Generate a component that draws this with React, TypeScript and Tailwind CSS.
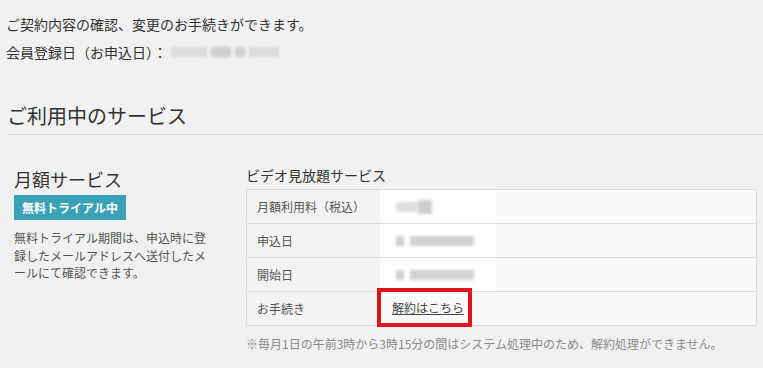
import React from "react";

const Blur = ({ w, className = "" }: { w: number; className?: string }) => (
  <span className={`inline-block h-[10px] bg-[#cfcfcf] blur-[1.5px] ${className}`} style={{ width: w }} />
);

const Row = ({ label, children, last = false }: { label: string; children: React.ReactNode; last?: boolean }) => (
  <div className={`flex ${last ? "h-[33px]" : "h-[34px] border-b border-[#dcdcdc]"}`}>
    <div className="w-[133px] shrink-0 bg-[#f3f3f3] pl-[10px] text-[#555] flex items-center">{label}</div>
    <div className="flex-1 bg-[#fafafa] relative flex items-center">{children}</div>
  </div>
);

export default function App() {
  return (
    <div className="w-[763px] h-[368px] overflow-hidden bg-[#f1f1f1] text-[#333] font-['Noto_Sans_CJK_JP','Noto_Sans',sans-serif]">
      <div className="pl-[6px] pt-[14px]">
        <p className="text-[14px] leading-[20px]">ご契約内容の確認、変更のお手続きができます。</p>
        <p className="text-[14px] leading-[20px] mt-[8px] flex items-center">
          会員登録日（お申込日）：
          <span className="ml-[4px] flex items-center gap-[4px]">
            <Blur w={36} className="bg-[#dcdcdc]" />
            <Blur w={20} className="bg-[#cbcbcb]" />
            <Blur w={10} className="bg-[#bdbdbd]" />
            <Blur w={30} className="bg-[#dcdcdc]" />
          </span>
        </p>
        <h2 className="text-[20px] leading-[30px] mt-[39px] ml-[1px]">ご利用中のサービス</h2>
        <div className="h-px bg-[#d8d8d8] mt-[3px] ml-[1px]" />
      </div>
      <div className="flex pl-[14px] mt-[30px]">
        <div className="w-[232px] pt-[2px]">
          <h3 className="text-[18px] leading-[24px]">月額サービス</h3>
          <div className="mt-[4px] inline-block bg-[#3aa2b6] text-white font-bold text-[12px] leading-[25px] px-[8px]">無料トライアル中</div>
          <p className="mt-[9px] text-[12px] leading-[17.5px] text-[#555] w-[200px]">
            無料トライアル期間は、申込時に登録したメールアドレスへ送付したメールにて確認できます。
          </p>
        </div>
        <div className="w-[511px]">
          <h4 className="text-[14px] leading-[20px]">ビデオ見放題サービス</h4>
          <div className="mt-[4px] border border-[#dcdcdc] text-[12px]">
            <Row label="月額利用料（税込）">
              <div className="bg-white w-[112px] h-full pl-[12px] flex items-center ml-[4px]">
                <Blur w={22} className="bg-[#dedede]" />
                <Blur w={14} className="bg-[#c8c8c8] h-[14px]" />
              </div>
            </Row>
            <Row label="申込日">
              <div className="bg-white w-[112px] h-full pl-[12px] flex items-center gap-[6px] ml-[4px]">
                <Blur w={8} />
                <Blur w={64} className="bg-[#d3d3d3]" />
              </div>
            </Row>
            <Row label="開始日">
              <div className="bg-white w-[112px] h-full pl-[12px] flex items-center gap-[6px] ml-[4px]">
                <Blur w={8} />
                <Blur w={64} className="bg-[#d3d3d3]" />
              </div>
            </Row>
            <Row label="お手続き" last>
              <div className="absolute left-[-3px] top-[-4px] w-[95px] h-[39px] border-[4px] border-[#e0141e] flex items-center pl-[11px]">
                <a className="underline text-[#444] text-[12px] whitespace-nowrap">解約はこちら</a>
              </div>
            </Row>
          </div>
          <p className="mt-[10px] text-[12px] leading-[16px] text-[#8a8a8a] whitespace-nowrap">※毎月1日の午前3時から3時15分の間はシステム処理中のため、解約処理ができません。</p>
        </div>
      </div>
    </div>
  );
}
